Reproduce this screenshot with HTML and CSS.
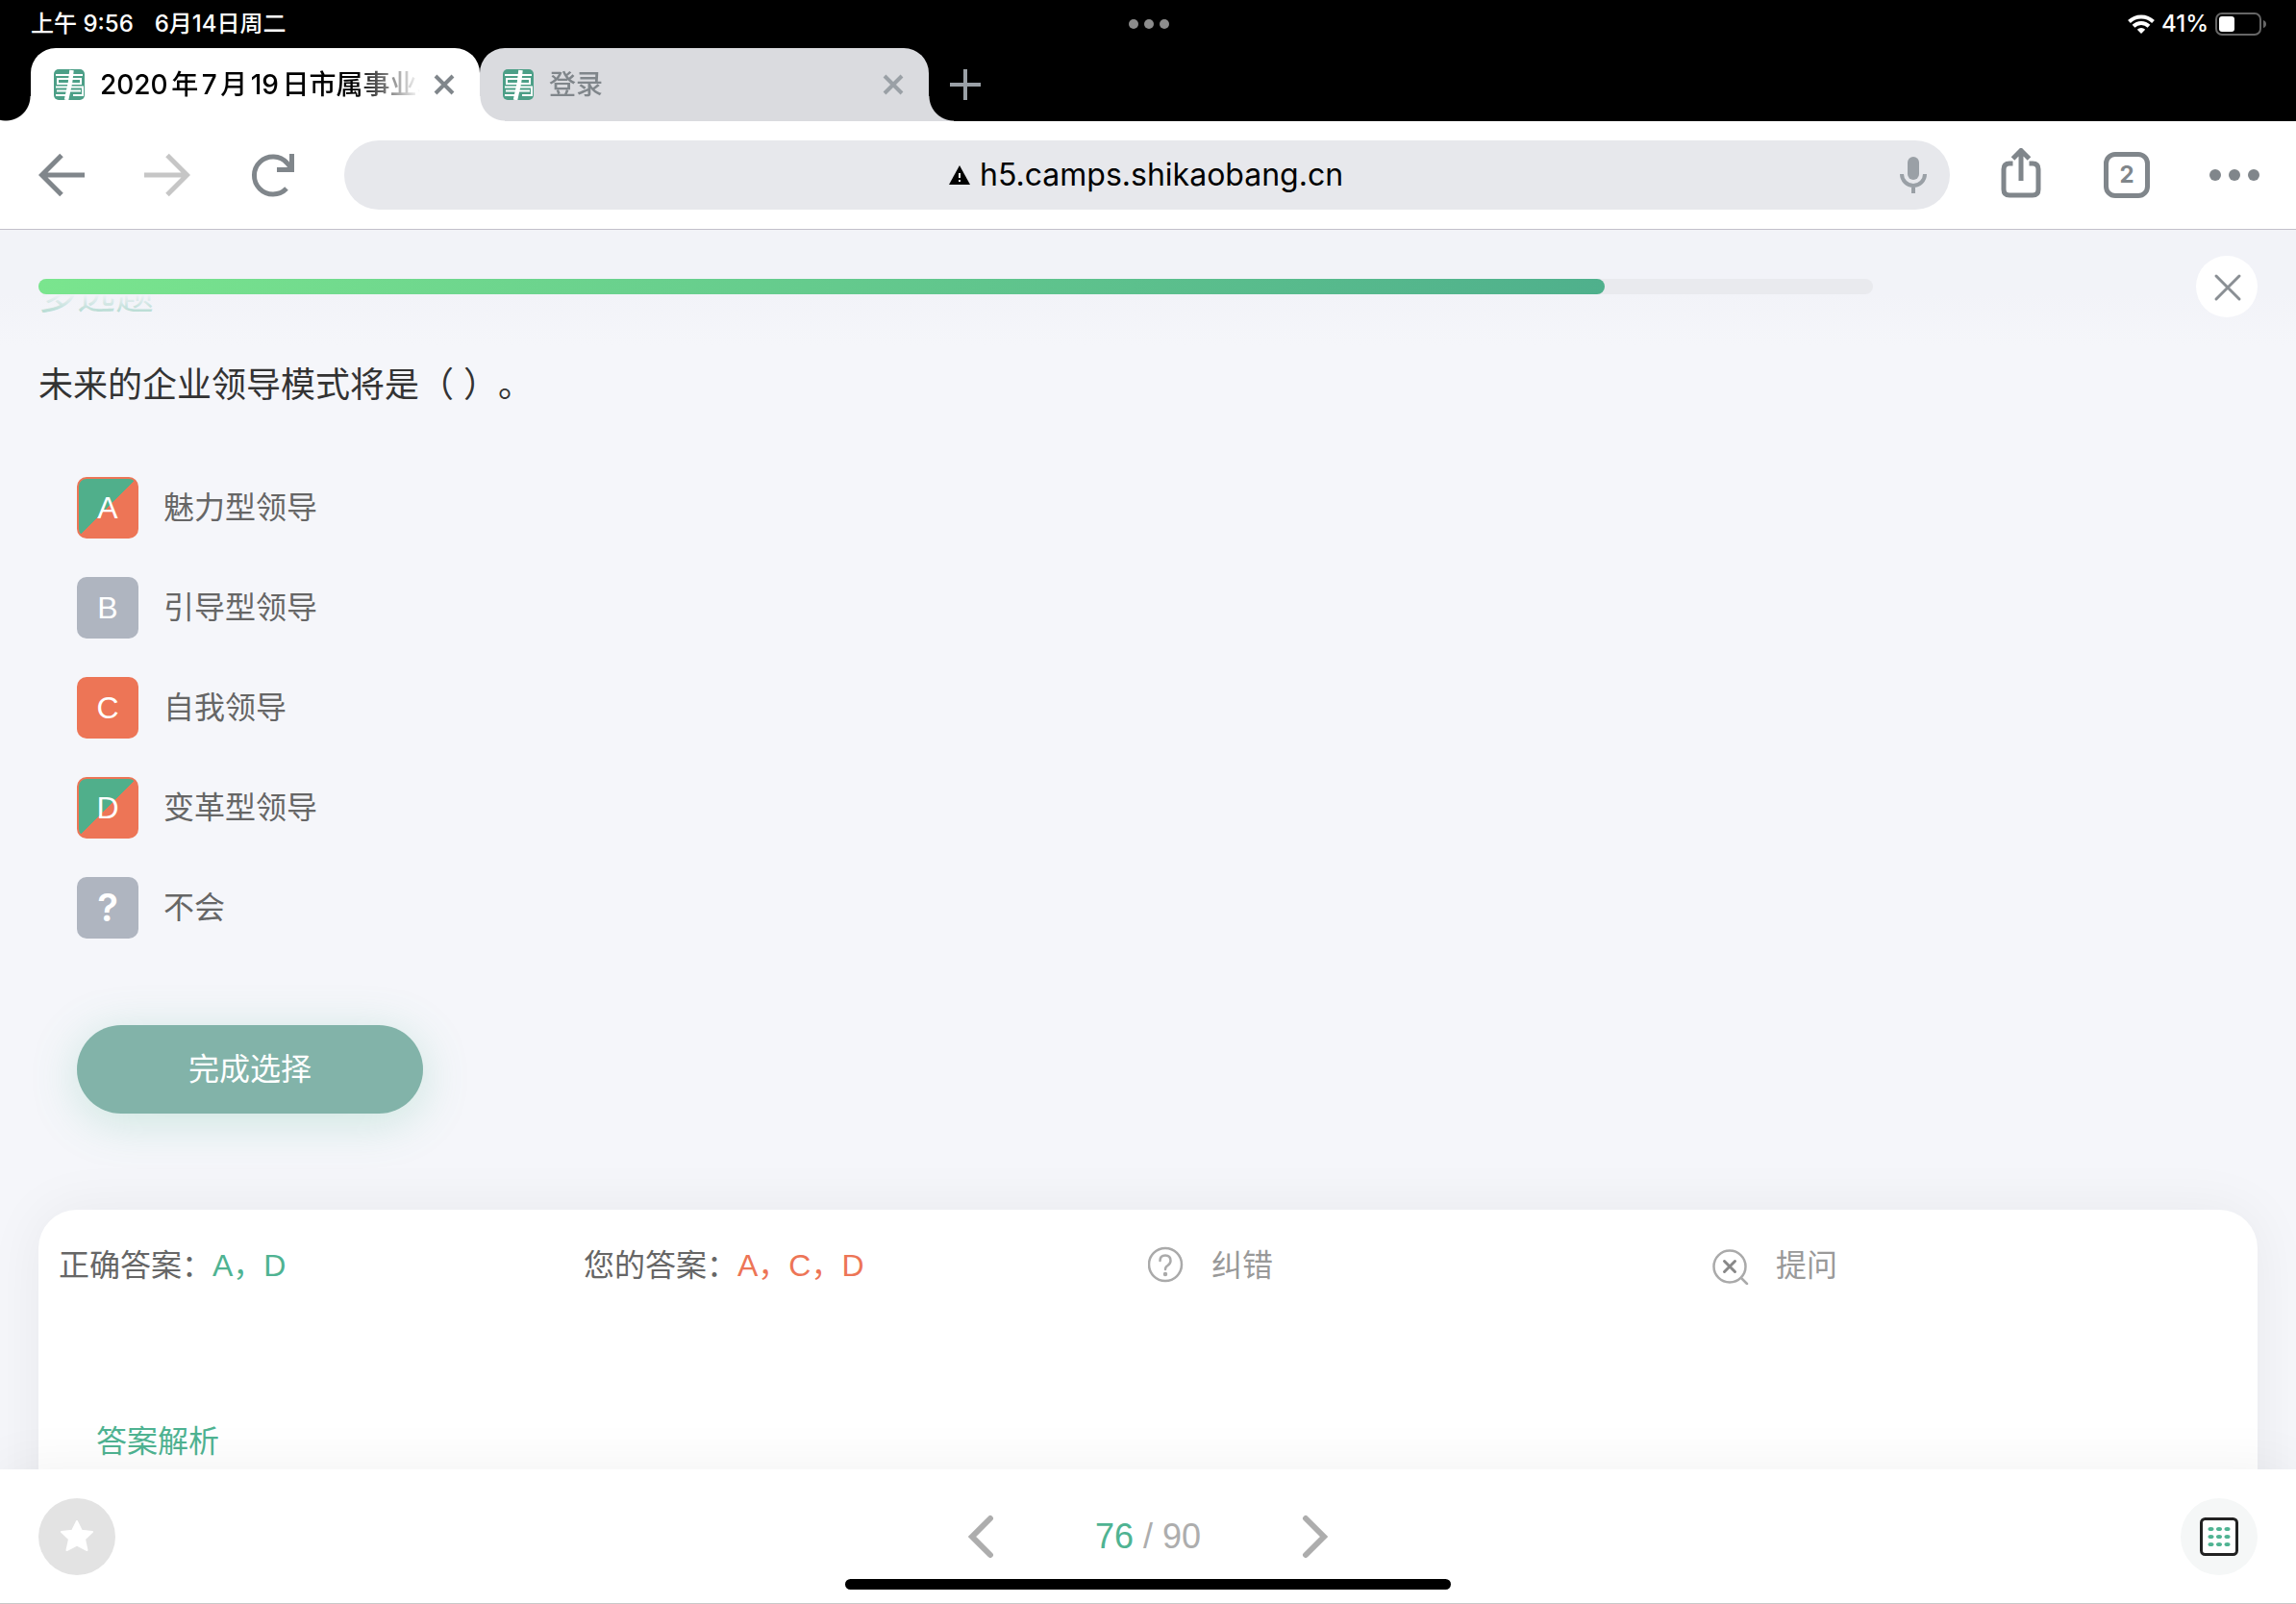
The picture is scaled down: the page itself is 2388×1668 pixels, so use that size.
FILE: index.html
```html
<!DOCTYPE html>
<html lang="zh-CN">
<head>
<meta charset="utf-8">
<meta name="viewport" content="width=device-width, initial-scale=1">
<title>2020年7月19日市属事业单位</title>
<link rel="stylesheet" href="styles.css">
</head>
<body>
<svg class="defs" aria-hidden="true">
  <symbol id="favicon" viewBox="0 0 32 32">
    <rect width="32" height="32" rx="5" fill="#4c9f87"/>
    <g fill="none" stroke="#fff" stroke-width="2">
      <path d="M2 6H30M4 10H28V15H4ZM2 18.500H30V27H20M3 22.500H28M2 27H13"/>
      <path d="M18.500 1L17 14L13 32" stroke-width="4.500"/>
    </g>
  </symbol>
</svg>

<header class="browser">
  <div class="status">
    <div class="status-left"><span>上午 9:56</span><span>6月14日周二</span></div>
    <svg class="status-dots" viewBox="0 0 44 12" fill="#8c8c8c"><circle cx="6" cy="6" r="5"/><circle cx="22" cy="6" r="5"/><circle cx="38" cy="6" r="5"/></svg>
    <div class="status-right">
      <svg class="wifi" viewBox="0 0 28 20" fill="none" stroke="#fff" stroke-width="4"><path d="M1.500 7.500A18 18 0 0 1 26.500 7.500"/><path d="M6 12.300A11.500 11.500 0 0 1 22 12.300"/><path d="M14 20L9.800 15.700A6 6 0 0 1 18.200 15.700Z" fill="#fff" stroke="none"/></svg>
      <span>41%</span>
      <svg class="battery" viewBox="0 0 54 24"><rect x="1" y="1" width="46" height="22" rx="6" fill="none" stroke="#666" stroke-width="2"/><rect x="4" y="4" width="16" height="16" rx="3" fill="#fff"/><path d="M50 8Q53 9 53 12T50 16Z" fill="#666"/></svg>
    </div>
  </div>

  <nav class="tabs" aria-label="标签页">
    <div class="tab tab-active">
      <svg class="favicon"><use href="#favicon"/></svg>
      <span class="tab-title">2020年7月19日市属事业单位</span>
      <button class="icon-btn tab-close" aria-label="关闭标签页"><svg viewBox="0 0 22 22" fill="none" stroke="currentColor" stroke-width="4"><path d="M2 2L20 20M20 2L2 20"/></svg></button>
    </div>
    <div class="tab tab-idle">
      <svg class="favicon"><use href="#favicon"/></svg>
      <span class="tab-title">登录</span>
      <button class="icon-btn tab-close" aria-label="关闭标签页"><svg viewBox="0 0 22 22" fill="none" stroke="currentColor" stroke-width="4"><path d="M2 2L20 20M20 2L2 20"/></svg></button>
    </div>
    <button class="icon-btn new-tab" aria-label="新建标签页"><svg viewBox="0 0 32 32" fill="none" stroke="currentColor" stroke-width="4"><path d="M16 0V32M0 16H32"/></svg></button>
  </nav>

  <div class="toolbar">
    <div class="nav-buttons">
      <button class="icon-btn" aria-label="后退"><svg viewBox="0 0 48 48" fill="none" stroke="currentColor" stroke-width="5"><path d="M48 24H3M24 3.500L3.500 24L24 44.500"/></svg></button>
      <button class="icon-btn disabled" aria-label="前进" disabled><svg viewBox="0 0 48 48" fill="none" stroke="currentColor" stroke-width="5"><path d="M0 24H45M24 3.500L44.500 24L24 44.500"/></svg></button>
      <button class="icon-btn" aria-label="重新加载"><svg viewBox="0 0 48 48" fill="none" stroke="currentColor" stroke-width="5"><path d="M38 38A19.500 19.500 0 1 1 38.500 11.500L43 17"/><path d="M43.500 2V18.500H28" /></svg></button>
    </div>
    <div class="omnibox">
      <div class="address">
        <svg class="warning" viewBox="0 0 22 20"><path d="M11 0L22 20H0Z"/><path d="M11 8V13M11 15V17" stroke="#fff" stroke-width="2"/></svg>
        <input class="url" type="text" aria-label="网址" value="h5.camps.shikaobang.cn">
      </div>
      <button class="icon-btn mic" aria-label="语音搜索"><svg viewBox="0 0 28 38" fill="none" stroke="currentColor" stroke-width="4"><rect x="8" y="0" width="12" height="24" rx="6" fill="currentColor" stroke="none"/><path d="M2 18A12 12 0 0 0 26 18M14 30V38"/></svg></button>
    </div>
    <div class="tool-buttons">
      <button class="icon-btn" aria-label="分享"><svg viewBox="0 0 48 56" fill="none" stroke="currentColor" stroke-width="5"><path d="M15.500 16H12Q6 16 6 22V43Q6 49 12 49H36Q42 49 42 43V22Q42 16 36 16H32.500M24 34V2M15.500 11L24 2.500L32.500 11"/></svg></button>
      <button class="icon-btn tab-count" aria-label="标签页数量">2</button>
      <button class="icon-btn more" aria-label="更多"><svg viewBox="0 0 52 12" fill="currentColor"><circle cx="6" cy="6" r="6"/><circle cx="26" cy="6" r="6"/><circle cx="46" cy="6" r="6"/></svg></button>
    </div>
  </div>
</header>

<main class="page">
  <div class="page-head">
    <div class="progress" role="progressbar" aria-label="答题进度" aria-valuenow="76" aria-valuemax="90"><div class="progress-fill" style="width: 85.4%"></div></div>
    <button class="close-page" aria-label="关闭"><svg viewBox="0 0 28 28" fill="none" stroke="#8a8f94" stroke-width="3" stroke-linecap="round"><path d="M3 3L27 27M27 3L3 27"/></svg></button>
  </div>

  <section class="question">
    <h2 class="kind">多选题</h2>
    <p class="stem">未来的企业领导模式将是（ ）。</p>
    <div class="options">
      <label class="option"><input type="checkbox" checked><span class="key key-both">A</span>魅力型领导</label>
      <label class="option"><input type="checkbox"><span class="key">B</span>引导型领导</label>
      <label class="option"><input type="checkbox" checked><span class="key key-wrong">C</span>自我领导</label>
      <label class="option"><input type="checkbox" checked><span class="key key-both">D</span>变革型领导</label>
      <label class="option"><input type="checkbox"><span class="key key-unknown">?</span>不会</label>
    </div>
    <button class="submit">完成选择</button>
  </section>

  <section class="result">
    <div class="summary">
      <p>正确答案：<span class="right">A，D</span></p>
      <p>您的答案：<span class="wrong">A，C，D</span></p>
      <button class="feedback"><svg viewBox="0 0 40 40" fill="none" stroke="#aaa" stroke-width="2.500" stroke-linecap="round"><circle cx="18" cy="19" r="17"/><path d="M12.500 15Q12.500 9.500 18 9.500T23.500 15Q23.500 18 20.500 20Q18 21.500 18 24"/><circle cx="18" cy="29" r="1" fill="#aaa"/></svg>纠错</button>
      <button class="feedback"><svg viewBox="0 0 40 40" fill="none" stroke="#aaa" stroke-width="2.500" stroke-linecap="round"><circle cx="18" cy="21" r="16.500"/><path d="M30 33L36 39"/><path d="M12.500 15.500L23.500 26.500M23.500 15.500L12.500 26.500" stroke="#888" stroke-width="3"/></svg>提问</button>
    </div>
    <h3 class="analysis">答案解析</h3>
  </section>
</main>

<footer class="footer">
  <button class="round star" aria-label="收藏"><svg viewBox="0 0 36 34" fill="#fff" stroke="#fff" stroke-width="2" stroke-linejoin="round"><path d="M18 1L22.800 10.800L34 12L26 19.500L28.500 31L18 25.500L7.500 31L10 19.500L2 12L13.200 10.800Z"/></svg></button>
  <div class="pager">
    <button class="icon-btn" aria-label="上一题"><svg viewBox="0 0 28 46" fill="none" stroke="#adadad" stroke-width="6" stroke-linecap="round"><path d="M24 4L5 23L24 42"/></svg></button>
    <span class="count"><b>76</b> / 90</span>
    <button class="icon-btn" aria-label="下一题"><svg viewBox="0 0 28 46" fill="none" stroke="#adadad" stroke-width="6" stroke-linecap="round"><path d="M4 4L23 23L4 42"/></svg></button>
  </div>
  <button class="round sheet" aria-label="答题卡"><svg viewBox="0 0 40 40"><rect x="1.500" y="1.500" width="37" height="37" rx="4" fill="#fff" stroke="#222" stroke-width="3"/><g fill="#4fb392"><ellipse cx="11.500" cy="12" rx="3" ry="2"/><ellipse cx="20" cy="12" rx="3" ry="2"/><ellipse cx="28.500" cy="12" rx="3" ry="2"/><ellipse cx="11.500" cy="20" rx="3" ry="2"/><ellipse cx="20" cy="20" rx="3" ry="2"/><ellipse cx="28.500" cy="20" rx="3" ry="2"/><ellipse cx="11.500" cy="28" rx="3" ry="2"/><ellipse cx="20" cy="28" rx="3" ry="2"/><ellipse cx="28.500" cy="28" rx="3" ry="2"/></g></svg></button>
  <div class="home-indicator"></div>
</footer>
</body>
</html>
```

FILE: styles.css
```css
* { box-sizing: border-box; }

body {
  margin: 0;
  height: 100vh;
  display: flex;
  flex-direction: column;
  overflow: hidden;
  background: #f5f6fa;
  font-family: "Liberation Sans", "Noto Sans CJK SC", sans-serif;
  font-size: 32px;
  line-height: 48px;
  text-spacing-trim: space-all;
  color: #666;
}

h2, h3, p { margin: 0; font-weight: 400; }
button, input { font: inherit; color: inherit; border: 0; background: none; padding: 0; }
svg { display: block; flex: none; }
.defs { position: absolute; width: 0; height: 0; }

.icon-btn { display: flex; align-items: center; justify-content: center; }

/* Browser chrome */
.browser {
  background: #fff;
  border-bottom: 1px solid #c2c0ca;
  font-family: Inter, "Noto Sans CJK SC", sans-serif;
}

.status {
  display: grid;
  grid-template-columns: 1fr auto 1fr;
  align-items: center;
  height: 50px;
  padding: 0 30px 0 32px;
  background: #000;
  color: #fff;
  font-size: 24px;
  font-weight: 500;
  line-height: 48px;
}
.status-left { display: flex; gap: 22px; }
.status-right { display: flex; align-items: center; justify-content: flex-end; gap: 7px; }
.status-dots { width: 44px; height: 12px; }
.wifi { width: 28px; height: 20px; }
.battery { width: 54px; height: 24px; }

.tabs {
  display: flex;
  height: 76px;
  padding-left: 32px;
  background: #000;
}
.tab {
  position: relative;
  display: flex;
  align-items: center;
  width: 467px;
  padding: 0 26px 0 24px;
  border-radius: 26px 26px 0 0;
  font-size: 28px;
  font-weight: 500;
}
.tab-active { background: #fff; color: #000; z-index: 1; }
.tab-idle { background: #dadbdf; color: #80868b; }
.tab-active::before,
.tab-active::after,
.tab-idle::after {
  content: "";
  position: absolute;
  bottom: 0;
  width: 26px;
  height: 26px;
}
.tab-active::before { right: 100%; width: 32px; background: radial-gradient(circle at 6px 0, transparent 25px, #fff 26px); }
.tab-active::after { left: 100%; background: radial-gradient(circle at 26px 0, transparent 25px, #fff 26px); }
.tab-idle::after { left: 100%; background: radial-gradient(circle at 26px 0, transparent 25px, #dadbdf 26px); }
.favicon { width: 32px; height: 32px; }
.tab-title {
  flex: 1;
  margin: 0 14px 0 16px;
  overflow: hidden;
  white-space: nowrap;
  text-autospace: normal;
  mask-image: linear-gradient(to right, #000 80%, transparent);
}
.tab-close { color: #80868b; }
.tab-close svg { width: 22px; height: 22px; }
.tab-idle .tab-close { color: #9aa0a6; }
.new-tab { width: 76px; color: #9aa0a6; }
.new-tab svg { width: 32px; height: 32px; }

.toolbar {
  display: flex;
  align-items: center;
  height: 112px;
  padding: 0 38px 0 40px;
  color: #80868b;
}
.nav-buttons { display: flex; gap: 62px; }
.nav-buttons svg { width: 48px; height: 48px; }
.disabled { color: #c6c6c6; }
.omnibox {
  flex: 1;
  display: grid;
  grid-template-columns: 1fr auto 1fr;
  align-items: center;
  height: 72px;
  margin: 0 50px;
  padding: 0 24px;
  border-radius: 36px;
  background: #e7e8ec;
}
.address {
  grid-column: 2;
  display: flex;
  align-items: center;
  gap: 10px;
  color: #000;
}
.warning { width: 22px; height: 20px; }
.url { width: 380px; height: 48px; outline: 0; }
.mic { justify-self: end; color: #9aa0a6; }
.mic svg { width: 28px; height: 38px; }
.tool-buttons { display: flex; align-items: center; gap: 62px; }
.tool-buttons svg { width: 48px; height: 56px; }
.tab-count {
  width: 48px;
  height: 48px;
  border: 5px solid #80868b;
  border-radius: 12px;
  font-size: 24px;
  font-weight: 700;
}
.tool-buttons .more svg { width: 52px; height: 12px; }

/* Question page */
.page {
  position: relative;
  flex: 1;
  min-height: 0;
  overflow: hidden;
  padding: 44px 40px 0;
}
.page-head {
  position: absolute;
  inset: 0 0 auto;
  z-index: 2;
  display: flex;
  align-items: flex-start;
  justify-content: space-between;
  height: 120px;
  padding: 27px 40px 0;
  background: linear-gradient(#f2f3f8 67px, #f2f3f8a0 86px, #f2f3f800 120px);
}
.progress {
  width: calc(100% - 400px);
  height: 16px;
  margin-top: 24px;
  border-radius: 8px;
  background: #e9eaee;
}
.progress-fill {
  height: 100%;
  border-radius: 8px;
  background: linear-gradient(to right, #7ae58e, #4fb08c);
}
.close-page {
  display: flex;
  align-items: center;
  justify-content: center;
  width: 64px;
  height: 64px;
  border-radius: 50%;
  background: #fff;
}
.close-page svg { width: 28px; height: 28px; overflow: visible; }

.kind { font-size: 40px; color: #4fb392; }
.stem {
  margin-top: 46px;
  font-size: 36px;
  color: #333;
}
.options {
  display: flex;
  flex-direction: column;
  gap: 40px;
  padding: 71px 40px 0;
}
.option {
  display: flex;
  align-items: center;
  gap: 26px;
}
.option input {
  position: absolute;
  opacity: 0;
  pointer-events: none;
}
.key {
  width: 64px;
  height: 64px;
  border-radius: 10px;
  background: #afb5c0;
  color: #fff;
  line-height: 64px;
  text-align: center;
}
.key-wrong { background: #ed7556; }
.key-both {
  border: 2px solid #ed7556;
  line-height: 60px;
  background: linear-gradient(135deg, #50af8b 50%, #ed7556 50%);
}
.key-unknown { font-family: Inter, sans-serif; font-size: 40px; font-weight: 600; }
.submit {
  display: block;
  width: 360px;
  height: 92px;
  margin: 90px 40px 0;
  border-radius: 46px;
  background: #82b3a9;
  box-shadow: 0 8px 48px #50b89440;
  color: #fff;
}

.result {
  height: 600px;
  margin-top: 100px;
  border-radius: 40px;
  background: #fff;
  box-shadow: 0 0 60px #0000000f;
}
.summary {
  display: grid;
  grid-template-columns: 546fr 587fr 587fr 567fr;
  align-items: center;
  padding: 34px 0 0 21px;
}
.right { color: #4fb392; }
.wrong { color: #ed7556; }
.feedback { display: flex; align-items: center; gap: 26px; color: #999; }
.feedback svg { width: 40px; height: 40px; }
.analysis { margin: 135px 60px 0; font-size: 32px; color: #4fb392; }

/* Bottom bar */
.footer {
  position: relative;
  z-index: 3;
  display: grid;
  grid-template-columns: 1fr auto 1fr;
  align-items: center;
  height: 140px;
  padding: 0 40px;
  border-bottom: 1px solid #c8c8c8;
  background: #fff;
  box-shadow: 0 0 60px #0000000f;
}
.round {
  display: flex;
  align-items: center;
  justify-content: center;
  width: 80px;
  height: 80px;
  border-radius: 50%;
}
.star { background: #e3e3e3; }
.star svg { width: 36px; height: 34px; }
.sheet { justify-self: end; background: #f5f7f7; }
.sheet svg { width: 40px; height: 40px; }
.pager { display: flex; align-items: center; gap: 105px; }
.pager svg { width: 28px; height: 46px; }
.count { font-size: 36px; color: #adadad; }
.count b { font-weight: 400; color: #4fb392; }
.home-indicator {
  position: absolute;
  bottom: 14px;
  left: 50%;
  width: 630px;
  height: 11px;
  margin-left: -315px;
  border-radius: 6px;
  background: #000;
}
```
